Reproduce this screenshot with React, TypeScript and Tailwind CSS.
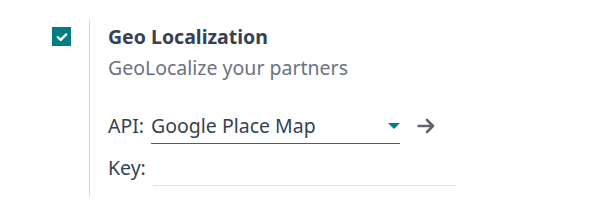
export default function App() {
  return (
    <div className="w-[590px] h-[210px] bg-white" style={{ fontFamily: '"Noto Sans", "Open Sans", sans-serif' }}>
      <div className="flex pt-5 pl-[52px]">
        <div className="w-[37px] pt-[7px]">
          <div className="w-[19px] h-[19px] bg-[#017e84] flex items-center justify-center">
            <svg width="12" height="12" viewBox="0 0 12 12" fill="none">
              <path d="M1.8 6.2 L4.7 8.9 L10.2 3.4" stroke="white" strokeWidth="2.4" strokeLinecap="round" strokeLinejoin="round" />
            </svg>
          </div>
        </div>
        <div className="h-[176px] border-l border-[#d8dadd] pl-[18px] text-[19.5px] leading-[26px]">
          <div className="font-bold text-[#374151] pt-[3.5px]">Geo Localization</div>
          <div className="text-[#6b7280] mt-[5px]">GeoLocalize your partners</div>
          <div className="flex items-start mt-[32px] text-[#374151]">
            <span className="w-[43px] shrink-0">API:</span>
            <div className="w-[249px] h-[31px] flex justify-between border-b border-[#017e84]">
              <span>Google Place Map</span>
              <svg width="12" height="6" viewBox="0 0 12 6" className="mt-[10px]">
                <path d="M0 0 H12 L6 6 Z" fill="#017e84" />
              </svg>
            </div>
            <svg width="19" height="16" viewBox="0 0 19 16" className="ml-[17px] mt-[5px]" fill="none">
              <path d="M1.5 8 H16 M10 2 L16 8 L10 14" stroke="#5f636f" strokeWidth="2.6" strokeLinecap="round" strokeLinejoin="round" />
            </svg>
          </div>
          <div className="flex items-start mt-[11.5px] text-[#374151]">
            <span className="w-[45px] shrink-0">Key:</span>
            <div className="w-[303px] h-[31px] border-b border-[#e2e4e7]"></div>
          </div>
        </div>
      </div>
    </div>
  );
}
